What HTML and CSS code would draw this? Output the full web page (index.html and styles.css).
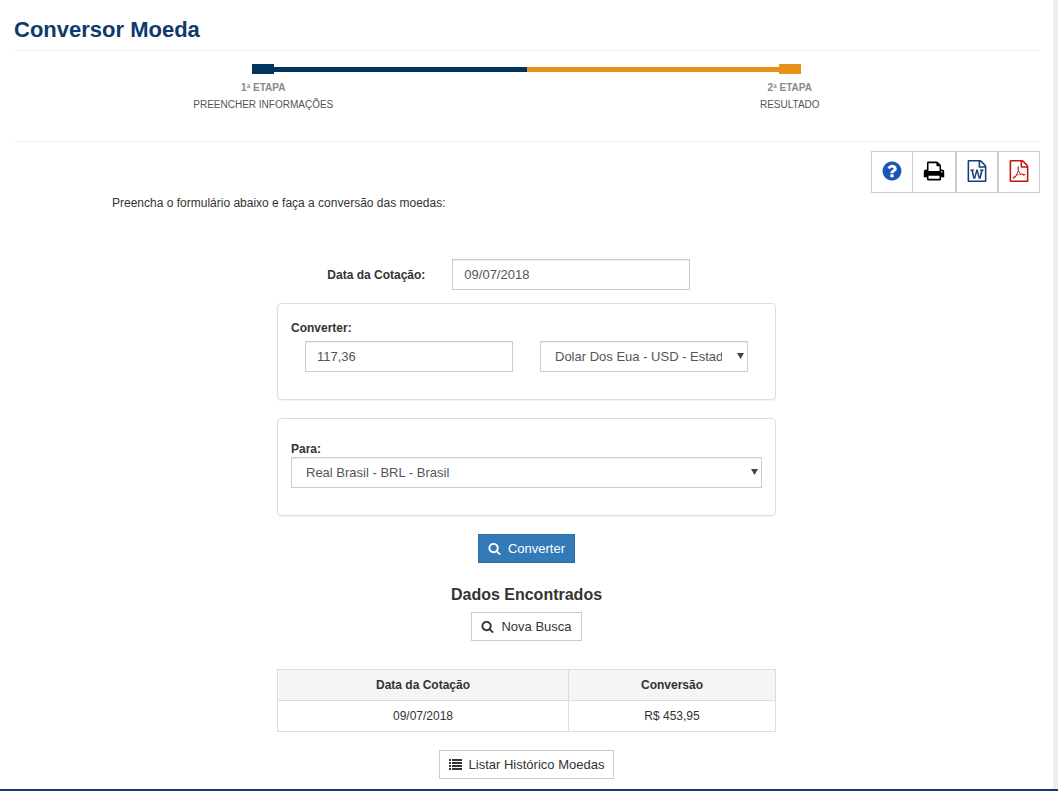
FILE: index.html
```html
<!DOCTYPE html>
<html lang="pt-BR">
<head>
<meta charset="utf-8">
<meta name="viewport" content="width=device-width, initial-scale=1">
<title>Conversor Moeda</title>
<link rel="stylesheet" href="styles.css">
</head>
<body>
<svg class="sprite" aria-hidden="true">
  <symbol id="search" viewBox="0 0 1792 1792"><path d="M1216 832q0-185-131.5-316.5t-316.5-131.5-316.5 131.5-131.5 316.5 131.5 316.5 316.5 131.5 316.5-131.5 131.5-316.5zm512 832q0 52-38 90t-90 38q-54 0-90-38l-343-342q-179 124-399 124-143 0-273.5-55.5t-225-150-150-225-55.5-273.5 55.5-273.5 150-225 225-150 273.5-55.5 273.5 55.5 225 150 150 225 55.5 273.5q0 220-124 399l343 343q37 37 37 90z"/></symbol>
</svg>
<main class="page">
  <h1 class="page-title">Conversor Moeda</h1>

  <ol class="steps">
    <li class="step step-first">
      <span class="step-marker"></span>
      <span class="step-name">1ª ETAPA</span>
      <span class="step-info">PREENCHER INFORMAÇÕES</span>
    </li>
    <li class="step step-last">
      <span class="step-marker"></span>
      <span class="step-name">2ª ETAPA</span>
      <span class="step-info">RESULTADO</span>
    </li>
  </ol>

  <div class="toolbar">
    <button type="button" class="tool tool-help" aria-label="Ajuda"><svg viewBox="0 0 1792 1792"><path d="M1024 1376v-192q0-14-9-23t-23-9h-192q-14 0-23 9t-9 23v192q0 14 9 23t23 9h192q14 0 23-9t9-23zm256-672q0-88-55.5-163t-138.5-116-170-41q-243 0-371 213-15 24 8 42l132 100q7 6 19 6 16 0 25-12 53-68 86-92 34-24 86-24 48 0 85.5 26t37.5 59q0 38-20 61t-68 45q-63 28-115.5 86.5t-52.5 125.5v36q0 14 9 23t23 9h192q14 0 23-9t9-23q0-19 21.5-49.5t54.5-49.5q32-18 49-28.5t46-35 44.5-48 28-60.5 12.5-81zm384 192q0 209-103 385.5t-279.5 279.5-385.5 103-385.5-103-279.5-279.5-103-385.5 103-385.5 279.5-279.5 385.5-103 385.5 103 279.5 279.5 103 385.5z"/></svg></button>
    <button type="button" class="tool tool-print" aria-label="Imprimir"><svg viewBox="0 0 1792 1792"><path d="M448 1536h896v-256h-896v256zm0-640h896v-384h-160q-40 0-68-28t-28-68v-160h-640v640zm1152 64q0-26-19-45t-45-19-45 19-19 45 19 45 45 19 45-19 19-45zm128 0v416q0 13-9.5 22.5t-22.5 9.5h-224v160q0 40-28 68t-68 28h-960q-40 0-68-28t-28-68v-160h-224q-13 0-22.5-9.5t-9.5-22.5v-416q0-79 56.5-135.5t135.5-56.5h64v-544q0-40 28-68t68-28h672q40 0 88 20t76 48l152 152q28 28 48 76t20 88v256h64q79 0 135.5 56.5t56.5 135.5z"/></svg></button>
    <button type="button" class="tool tool-word" aria-label="Exportar Word"><svg viewBox="0 0 1792 1792"><path d="M1596 380q28 28 48 76t20 88v1152q0 40-28 68t-68 28h-1344q-40 0-68-28t-28-68v-1600q0-40 28-68t68-28h896q40 0 88 20t76 48zm-444-244v376h376q-10-29-22-41l-313-313q-12-12-41-22zm384 1528v-1024h-416q-40 0-68-28t-28-68v-416h-768v1536h1280zm-1175-896v107h70l164 661h159l128-485q7-20 10-46 2-16 2-24h4l3 24q1 3 3.500 20t5.500 26l128 485h159l164-661h70v-107h-300v107h90l-99 438q-5 20-7 46l-2 21h-4l-3-21q-1-5-4-21t-5-25l-144-545h-114l-144 545q-2 9-4.500 24.500t-3.500 21.500l-4 21h-4l-2-21q-2-26-7-46l-99-438h90v-107h-300z"/></svg></button>
    <button type="button" class="tool tool-pdf" aria-label="Exportar PDF"><svg viewBox="0 0 1792 1792"><path d="M1596 380q28 28 48 76t20 88v1152q0 40-28 68t-68 28h-1344q-40 0-68-28t-28-68v-1600q0-40 28-68t68-28h896q40 0 88 20t76 48zm-444-244v376h376q-10-29-22-41l-313-313q-12-12-41-22zm384 1528v-1024h-416q-40 0-68-28t-28-68v-416h-768v1536h1280zm-514-593q33 26 84 56 59-7 117-7 147 0 177 49 16 22 2 52 0 1-1 2l-2 2v1q-6 38-71 38-48 0-115-20t-130-53q-221 24-392 83-153 262-242 262-15 0-28-7l-24-12q-1-1-6-5-10-10-6-36 9-40 56-91.500t132-96.500q14-9 23 6 2 2 2 4 52-85 107-197 68-136 104-262-24-82-30.500-159.500t6.500-127.500q11-40 42-40h22q23 0 35 15 18 21 9 68-2 6-4 8 1 3 1 8v30q-2 123-14 192 55 164 146 238zm-576 411q52-24 137-158-51 40-87.500 84t-49.500 74zm398-920q-15 42-2 132 1-7 7-44 0-3 7-43 1-4 4-8-1-1-1-2-1-2-1-3-1-22-13-36 0 1-1 2v2zm-124 661q135-54 284-81-2-1-13-9.500t-16-13.500q-76-67-127-176-27 86-83 197-30 56-45 83zm646-16q-24-24-140-24 76 28 124 28 14 0 18-1 0-1-2-3z"/></svg></button>
  </div>

  <p class="intro">Preencha o formulário abaixo e faça a conversão das moedas:</p>

  <div class="content">
    <form class="converter">
      <div class="date-row">
        <label class="label" for="data">Data da Cotação:</label>
        <input class="field" id="data" type="text" value="09/07/2018">
      </div>
      <section class="panel">
        <label class="label" for="valor">Converter:</label>
        <div class="pair">
          <input class="field" id="valor" type="text" value="117,36">
          <div class="select-box">
            <select class="field" aria-label="Moeda de origem"><option>Dolar Dos Eua - USD - Estados Unidos</option></select>
          </div>
        </div>
      </section>
      <section class="panel">
        <label class="label" for="destino">Para:</label>
        <div class="select-box">
          <select class="field" id="destino"><option>Real Brasil - BRL - Brasil</option></select>
        </div>
      </section>
      <button type="button" class="btn btn-primary"><svg class="icon"><use href="#search"/></svg>Converter</button>
    </form>

    <section class="results">
      <h2 class="results-title">Dados Encontrados</h2>
      <button type="button" class="btn"><svg class="icon"><use href="#search"/></svg>Nova Busca</button>
      <table class="rates">
        <thead><tr><th class="col-date">Data da Cotação</th><th>Conversão</th></tr></thead>
        <tbody><tr><td>09/07/2018</td><td>R$ 453,95</td></tr></tbody>
      </table>
      <button type="button" class="btn"><svg class="icon" viewBox="0 0 13 13"><path d="M0 1h2v2H0zM3 1h10v2H3zM0 4h2v2H0zM3 4h10v2H3zM0 7h2v2H0zM3 7h10v2H3zM0 10h2v2H0zM3 10h10v2H3z"/></svg>Listar Histórico Moedas</button>
    </section>
  </div>
</main>
</body>
</html>
```

FILE: styles.css
```css
* {
  box-sizing: border-box;
}

body {
  margin: 0;
  background: #eee;
  border-bottom: 2px solid #153a6b;
  color: #333;
  font: 12px/16px "Liberation Sans", Arial, sans-serif;
}

.sprite {
  display: none;
}

.page {
  margin-right: 5px;
  padding: 12px 13px 10px 14px;
  background: #fff;
}

.page-title {
  margin: 0;
  padding-bottom: 2px;
  border-bottom: 1px solid #eee;
  color: #103a6b;
  font-size: 22px;
  line-height: 36px;
}

.steps,
.content {
  margin: 0 -13px 0 -14px;
}

.steps {
  display: flex;
  padding: 13px 0 28px;
  list-style: none;
}

.step {
  flex: 1;
  display: flex;
  flex-direction: column;
  align-items: center;
  color: #00355f;
}

.step-last {
  color: #e8911a;
}

.step-marker {
  display: flex;
  align-items: center;
  width: calc(50% + 11px);
  height: 10px;
}

.step-marker::before {
  content: "";
  width: 22px;
  height: 10px;
  background: currentColor;
}

.step-marker::after {
  content: "";
  flex: 1;
  height: 5px;
  background: currentColor;
}

.step-first .step-marker {
  align-self: flex-end;
}

.step-last .step-marker {
  flex-direction: row-reverse;
  align-self: flex-start;
}

.step-name {
  padding-top: 5px;
  color: #888;
  font-size: 10px;
  font-weight: bold;
  line-height: 17px;
}

.step-info {
  color: #555;
  font-size: 10px;
  line-height: 17px;
}

.toolbar {
  display: flex;
  justify-content: flex-end;
  padding-top: 9px;
  border-top: 1px solid #eee;
}

.tool {
  display: flex;
  align-items: center;
  justify-content: center;
  width: 42px;
  height: 42px;
  padding: 0 0 2px;
  border: 1px solid #ccc;
  background: #fff;
}

.tool svg {
  width: 22px;
  height: 22px;
  fill: currentColor;
}

.tool-help {
  color: #1a57b8;
}

.tool-print {
  width: 44px;
  margin-left: -1px;
  color: #000;
}

.tool-word {
  color: #153f75;
}

.tool-pdf {
  color: #c41212;
}

.intro {
  margin: 2px 98px 48px;
}

.converter,
.results {
  display: flex;
  flex-direction: column;
  align-items: center;
  width: 100%;
  max-width: 499px;
  margin: 0 auto;
}

.date-row {
  display: grid;
  grid-template-columns: 5fr 8fr 2fr;
  gap: 27px;
  align-items: center;
  width: 100%;
  margin-bottom: 13px;
}

.date-row .label {
  text-align: right;
}

.label {
  display: block;
  font-weight: bold;
}

.field {
  display: block;
  width: 100%;
  min-width: 0;
  height: 31px;
  padding: 0 11px;
  border: 1px solid #ccc;
  border-radius: 0;
  background: #fff;
  box-shadow: inset 0 1px 1px rgba(0, 0, 0, 0.075);
  color: #555;
  font: 13px/18px "Liberation Sans", Arial, sans-serif;
}

.select-box {
  position: relative;
}

.select-box .field {
  appearance: none;
  padding: 0 25px 0 14px;
}

.select-box::after {
  content: "";
  position: absolute;
  top: 12px;
  right: 4px;
  width: 7px;
  height: 6px;
  background: #444;
  clip-path: polygon(0 0, 100% 0, 50% 100%);
  pointer-events: none;
}

.panel {
  width: 100%;
  margin-bottom: 18px;
  padding: 16px 13px 27px;
  border: 1px solid #ddd;
  border-radius: 4px;
  box-shadow: 0 1px 1px rgba(0, 0, 0, 0.05);
}

.panel + .panel {
  padding-top: 22px;
}

.pair {
  display: grid;
  grid-template-columns: 1fr 1fr;
  gap: 27px;
  padding: 5px 14px 0;
}

.btn {
  display: flex;
  align-items: center;
  gap: 7px;
  height: 29px;
  padding: 0 9px;
  border: 1px solid #ccc;
  background: #fff;
  color: #333;
  font: 13px/18px "Liberation Sans", Arial, sans-serif;
}

.btn-primary {
  border-color: #2e6da4;
  background: #337ab7;
  color: #fff;
}

.icon {
  width: 13px;
  height: 13px;
  fill: currentColor;
}

.results-title {
  margin: 21px 0 6px;
  font-size: 16px;
  line-height: 22px;
}

.rates {
  width: 100%;
  margin: 28px 0 18px;
  border-collapse: collapse;
  text-align: center;
}

.rates th,
.rates td {
  height: 31px;
  padding: 0 8px;
  border: 1px solid #ddd;
}

.rates th {
  background: #f5f5f5;
}

.col-date {
  width: 291px;
}
```
